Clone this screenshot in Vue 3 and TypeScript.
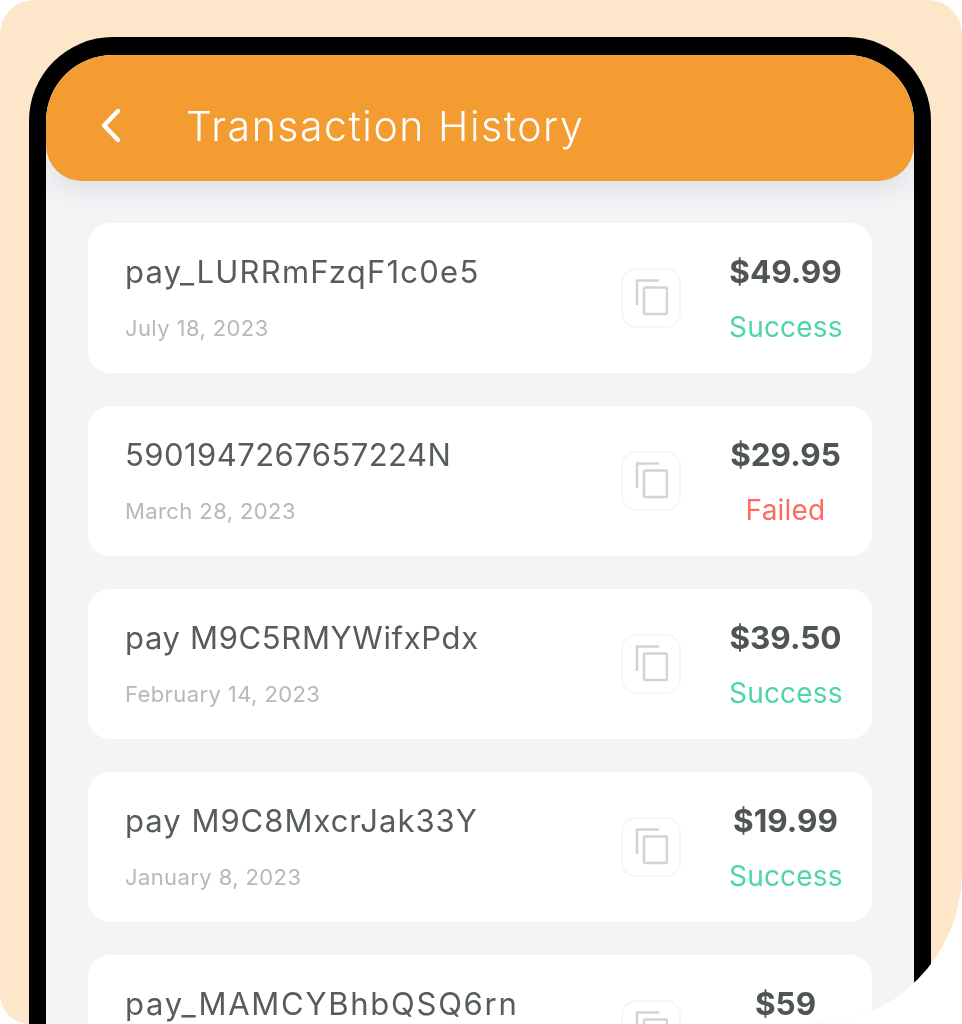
<script setup lang="ts">
interface Transaction {
  id: string;
  date: string;
  amount: string;
  status: 'Success' | 'Failed';
  tracking: number;
}

const transactions: Transaction[] = [
  { id: 'pay_LURRmFzqF1c0e5', date: 'July 18, 2023', amount: '$49.99', status: 'Success', tracking: 1.25 },
  { id: '5901947267657224N', date: 'March 28, 2023', amount: '$29.95', status: 'Failed', tracking: 0.45 },
  { id: 'pay M9C5RMYWifxPdx', date: 'February 14, 2023', amount: '$39.50', status: 'Success', tracking: 0.65 },
  { id: 'pay M9C8MxcrJak33Y', date: 'January 8, 2023', amount: '$19.99', status: 'Success', tracking: 1 },
  { id: 'pay_MAMCYBhbQSQ6rn', date: 'December 2, 2022', amount: '$59', status: 'Success', tracking: 1.75 },
];
</script>

<template>
  <div class="backdrop">
    <div class="phone">
      <header class="header">
        <svg class="back" viewBox="0 0 24 36" width="24" height="36" fill="none">
          <path d="M19 3 L5 17.5 L19 32" stroke="#fff" stroke-width="4.4" stroke-linecap="round" stroke-linejoin="round" />
        </svg>
        <h1 class="title">Transaction History</h1>
      </header>

      <div class="list">
        <div v-for="t in transactions" :key="t.id" class="card">
          <div class="info">
            <div class="id" :style="{ letterSpacing: `${t.tracking}px` }">{{ t.id }}</div>
            <div class="date">{{ t.date }}</div>
          </div>
          <div class="copy">
            <svg viewBox="0 0 34 38" width="34" height="38" fill="none" stroke="#d2d4d4" stroke-width="2.6">
              <path d="M3 26 V1.5 H25" />
              <rect x="10" y="8.5" width="23" height="26.5" rx="1.5" />
            </svg>
          </div>
          <div class="money">
            <div class="amount">{{ t.amount }}</div>
            <div class="status" :class="t.status.toLowerCase()">{{ t.status }}</div>
          </div>
        </div>
      </div>
    </div>
  </div>
</template>

<style>
html,
body {
  background: #fff;
  overflow: hidden;
}
</style>

<style scoped>
.backdrop {
  width: 962px;
  height: 1024px;
  box-sizing: border-box;
  padding: 37px 31px 0 29px;
  background: #fee6cb;
  border-radius: 34px 34px 152px 30px;
  overflow: hidden;
  font-family: Inter, "Noto Sans", sans-serif;
}

.phone {
  height: 1100px;
  box-sizing: border-box;
  background: #f3f4f6;
  border: 17px solid #000;
  border-top-width: 18px;
  border-bottom: 0;
  border-radius: 84px 84px 0 0;
  overflow: hidden;
}

.header {
  height: 126px;
  box-sizing: border-box;
  display: flex;
  align-items: center;
  gap: 63px;
  padding: 15px 0 0 53px;
  background: #f39c32;
  border-radius: 66px 66px 36px 36px;
  box-shadow: 0 10px 24px rgba(60, 70, 80, 0.1);
}

.back {
  flex: none;
}

.title {
  margin: 0;
  color: #fff;
  font-size: 41px;
  font-weight: 300;
  letter-spacing: 1.55px;
  filter: blur(0.5px);
}

.list {
  display: flex;
  flex-direction: column;
  gap: 33px;
  padding: 42px 42px 0;
}

.card {
  height: 150px;
  flex: none;
  display: flex;
  align-items: center;
  padding: 0 30px 0 37px;
  background: #fff;
  border-radius: 22px;
}

.info {
  flex: 1;
  align-self: flex-start;
  padding-top: 29px;
}

.id {
  color: #565b5b;
  font-size: 31px;
  line-height: 40px;
  filter: blur(0.6px);
}

.date {
  margin-top: 22px;
  color: #b6b9b9;
  font-size: 22px;
  line-height: 28px;
  letter-spacing: 0.4px;
  filter: blur(0.6px);
}

.copy {
  width: 60px;
  height: 60px;
  flex: none;
  display: flex;
  align-items: center;
  justify-content: center;
  border: 2px solid #f5f6f6;
  border-radius: 15px;
  box-sizing: border-box;
  margin-right: 48px;
  filter: blur(0.4px);
}

.money {
  width: 113px;
  align-self: flex-start;
  padding-top: 29px;
  text-align: center;
}

.amount {
  color: #4f5555;
  font-size: 31.5px;
  line-height: 40px;
  font-weight: 700;
  filter: blur(0.6px);
}

.status {
  margin-top: 20px;
  font-size: 28px;
  line-height: 30px;
  letter-spacing: 0.2px;
  filter: blur(0.5px);
}

.success {
  color: #4fd6a3;
}

.failed {
  color: #ff6b5e;
}
</style>
